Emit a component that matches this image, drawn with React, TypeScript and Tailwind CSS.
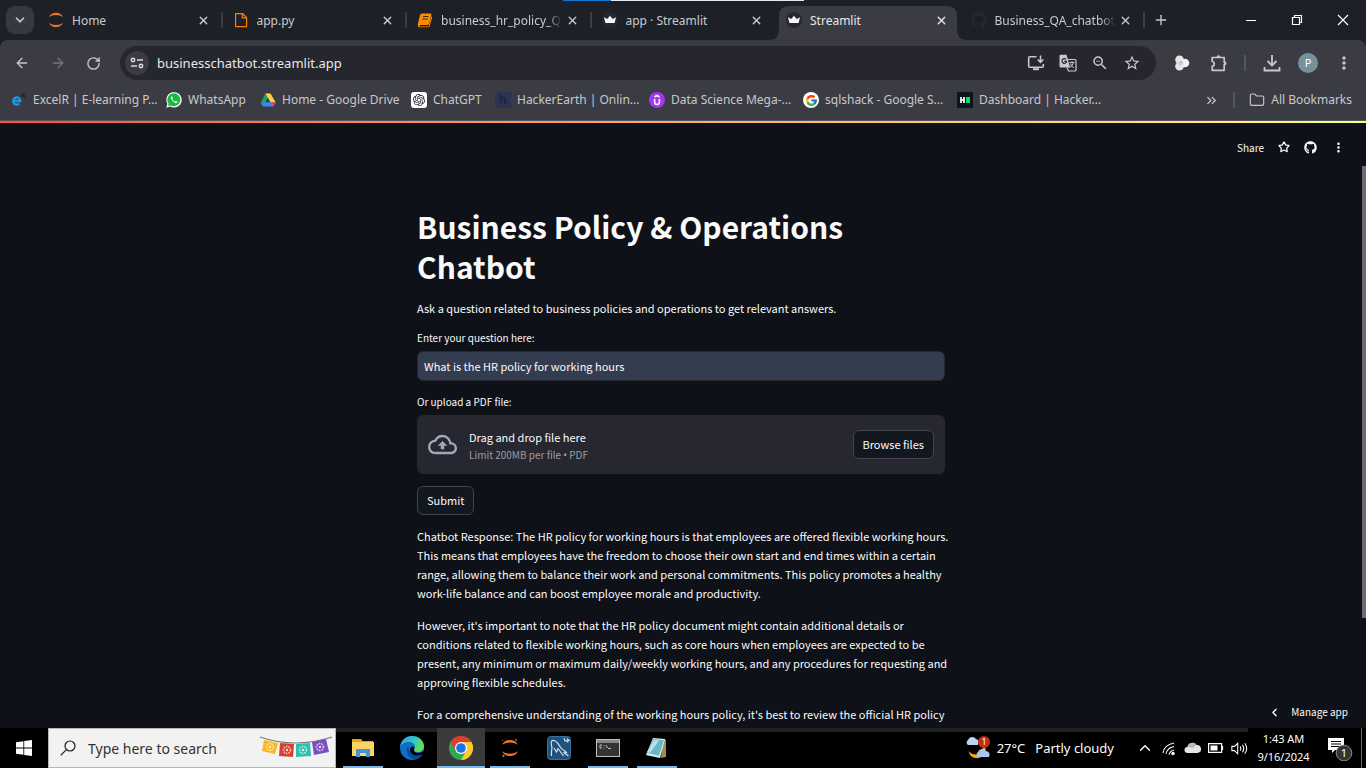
import React from "react";
import { ArrowLeft, ArrowRight, RotateCw, Star, X, Plus, ChevronDown, ChevronLeft, ChevronUp, ChevronsRight, Folder } from "lucide-react";
import { FaGithub, FaWhatsapp } from "react-icons/fa";
import { SiOpenai } from "react-icons/si";
import { FcGoogle } from "react-icons/fc";
import { MdMoreVert, MdOutlineZoomOut, MdStarBorder, MdOutlineCloudUpload } from "react-icons/md";

const uiFont = "font-['Noto_Sans',sans-serif]";
const appFont = "font-['Noto_Sans_CJK_SC',sans-serif]";

function JupyterMark({ size = 16, dots = false }: { size?: number; dots?: boolean }) {
  return (
    <svg width={size} height={size} viewBox="0 0 16 16">
      <path d="M.8 5.2C2 2.500 4.800.8 8 .8s6 1.700 7.200 4.400C13.400 3.800 10.900 3 8 3S2.600 3.800.8 5.200Z" fill="#f37726" />
      <path d="M.8 10.800C2 13.500 4.800 15.200 8 15.200s6-1.700 7.200-4.400C13.400 12.200 10.900 13 8 13s-5.400-.8-7.200-2.200Z" fill="#f37726" />
      {dots && (
        <g fill="#8a8a8a">
          <circle cx="13.500" cy="0.800" r="0.800" />
          <circle cx="1.600" cy="1.400" r="0.500" />
          <circle cx="2.200" cy="15" r="1" />
        </g>
      )}
    </svg>
  );
}

function PageMark() {
  return (
    <svg width="16" height="16" viewBox="0 0 16 16" fill="none" stroke="#ff7c00" strokeWidth="1.200">
      <path d="M2.600 1.600h7l4 4v9h-11z M9.300 1.600v4.300h4.300" />
    </svg>
  );
}

function BookMark() {
  return (
    <svg width="16" height="16" viewBox="0 0 16 16">
      <path d="M4.800 1.500h8.400q1.500 0 1.100 1.400l-2.300 8.600q-.4 1.500-1.800 1.500H3.500q-1.100 0-.9.900.2.500.9.500h8.100l2.500-9.300.7-.8q.5.4.3 1.200l-2.300 8.300q-.4 1.500-1.800 1.500H3q-2.300 0-2.300-2.300L3 3q.4-1.500 1.800-1.500Z" fill="#ff8c00" />
      <path d="M6 4.500h5.500M5.300 7h5.500" stroke="#3a2a14" strokeWidth="1" />
    </svg>
  );
}

function CrownMark() {
  return (
    <svg width="16" height="16" viewBox="0 0 16 16">
      <circle cx="8" cy="8" r="8" fill="#262730" />
      <path d="M2 5.200 5.300 7 8 3.800 10.700 7 14 5.200 12.600 11H3.400Z" fill="#f5f5f5" />
    </svg>
  );
}

const tabs = [
  { title: "Home", icon: <JupyterMark /> },
  { title: "app.py", icon: <PageMark /> },
  { title: "business_hr_policy_QA", icon: <BookMark />, fade: true },
  { title: "app · Streamlit", icon: <CrownMark /> },
  { title: "Streamlit", icon: <CrownMark />, active: true },
  { title: "Business_QA_chatbot/", icon: <FaGithub size={16} color="#24292e" />, fade: true },
];

function TabStrip() {
  return (
    <header className="relative flex h-10 items-center bg-[#1d2027] text-[#c9cacf]">
      <div className="absolute left-[563px] top-0 h-px w-12 bg-[#0a78d4]" />
      <div className="absolute left-[611px] top-0 h-px w-[193px] bg-[#e8e8e8]" />
      <button aria-label="Search tabs" className="ml-1.5 mr-1 flex size-7 shrink-0 items-center justify-center rounded-[9px] bg-[#373940]">
        <ChevronDown size={14} strokeWidth={3} />
      </button>
      <nav className="flex h-full max-w-[1107px] flex-1">
        {tabs.map((t, i) => (
          <div key={i} className={"relative flex min-w-0 flex-1 items-center pl-2.5 pr-[13px] " + (t.active ? "text-[#e6e6ea]" : "")}>
            {t.active && (
              <svg className="absolute bottom-0 left-[-7px] h-[34px] w-[198px]" viewBox="0 0 198 34" preserveAspectRatio="none">
                <path d="M0 34Q10 34 10 24V10Q10 0 20 0H178Q188 0 188 10V24Q188 34 198 34Z" fill="#3b3c43" />
              </svg>
            )}
            <span className="relative shrink-0">{t.icon}</span>
            <a
              href="#"
              className={
                "relative ml-2 flex-1 overflow-hidden whitespace-nowrap pt-px text-xs " +
                (t.fade ? "[mask-image:linear-gradient(to_right,black_88%,transparent)]" : "")
              }
            >
              {t.title}
            </a>
            <button aria-label="Close tab" className="relative ml-1 shrink-0">
              <X size={13} strokeWidth={2.500} />
            </button>
            {(i < 3 || i === 5) && <i className="absolute right-0 top-3 h-4 w-0.5 rounded bg-[#3c3e46]" />}
          </div>
        ))}
      </nav>
      <button aria-label="New tab" className="ml-2">
        <Plus size={16} />
      </button>
      <div className="ml-auto mr-4 flex items-center gap-8 text-white">
        <button aria-label="Minimize">
          <svg width="14" height="14" viewBox="0 0 14 14"><path d="M2 7.500h10" stroke="currentColor" /></svg>
        </button>
        <button aria-label="Restore">
          <svg width="14" height="14" viewBox="0 0 14 14" fill="none" stroke="currentColor" strokeWidth="1.200"><path d="M2.500 4.500h7v7h-7z M4.500 4.500v-2h7v7h-2" /></svg>
        </button>
        <button aria-label="Close">
          <svg width="14" height="14" viewBox="0 0 14 14" stroke="currentColor" strokeWidth="1.200"><path d="m2 2 10 10M12 2 2 12" /></svg>
        </button>
      </div>
    </header>
  );
}

function InstallMark() {
  return (
    <svg width="18" height="18" viewBox="0 0 18 18" fill="none" stroke="currentColor" strokeWidth="1.600">
      <path d="M9.500 2.800H2.600q-.9 0-.9.900v8.600q0 .9.9.9h12.800q.9 0 .9-.9V10" />
      <path d="M6 15.200h6" strokeWidth="2" />
      <path d="M13.500 1.500v6.500M10.700 5.500l2.800 2.800 2.800-2.800" />
    </svg>
  );
}

function TranslateMark() {
  return (
    <svg width="18" height="18" viewBox="0 0 18 18" fill="none">
      <path d="M8 5.500h8q1 0 1 1V16q0 1-1 1H9.500L8 13.500" stroke="currentColor" strokeWidth="1.200" />
      <path d="M10.500 8.500h5M13 7.300v1.200M14.500 8.500Q13.500 12 10.800 13.500M11.500 9.500q1 2.500 3.300 4.500" stroke="currentColor" strokeWidth="1" />
      <path d="M1.500.8h6l3.700 12.700H1.500q-1 0-1-1V1.800q0-1 1-1Z" fill="currentColor" />
      <path d="M7 5.400a2.300 2.300 0 1 0 .6 2H5.300" stroke="#26272e" strokeWidth="1.200" />
    </svg>
  );
}

function PuzzleMark() {
  return (
    <svg width="18" height="18" viewBox="0 0 18 18" fill="none" stroke="currentColor" strokeWidth="1.700" strokeLinejoin="round">
      <path d="M2.200 3.500h12v4.800h.6v2.200h-.6v5.800h-12v-4q2-.4 2-2.400t-2-2.400Z" />
      <path d="M6.800 3.200a1.700 1.700 0 0 1 3.400 0ZM14.500 7.700a1.700 1.700 0 0 1 0 3.400Z" fill="currentColor" strokeWidth=".6" />
    </svg>
  );
}

function Toolbar() {
  return (
    <div className="flex h-[46px] items-center rounded-t-lg bg-[#3b3c43] pl-3.5 pr-3 text-[#c7c8cc]">
      <button aria-label="Back"><ArrowLeft size={16} /></button>
      <button aria-label="Forward" className="ml-5 text-[#74757b]"><ArrowRight size={16} /></button>
      <button aria-label="Reload" className="ml-5 mr-[19px]"><RotateCw size={15} strokeWidth={2.200} /></button>
      <div className="flex h-[34px] flex-1 items-center rounded-full bg-[#26272e] pl-[5px] pr-[15px]">
        <button aria-label="Site information" className="flex size-6 items-center justify-center rounded-full bg-[#3b3c43]">
          <svg width="14" height="14" viewBox="0 0 14 14" fill="none" stroke="#dcdce0" strokeWidth="1.500">
            <circle cx="3" cy="4" r="1.700" /><path d="M7 4h6" /><circle cx="11" cy="10" r="1.700" /><path d="M1 10h6" />
          </svg>
        </button>
        <input aria-label="Address" defaultValue="businesschatbot.streamlit.app" className="ml-2 min-w-0 flex-1 bg-transparent pt-0.5 text-[13px] text-[#e8e8eb] outline-none" />
        <div className="flex items-center gap-3.5">
          <button aria-label="Install app"><InstallMark /></button>
          <button aria-label="Translate"><TranslateMark /></button>
          <button aria-label="Zoom"><MdOutlineZoomOut size={18} /></button>
          <button aria-label="Bookmark"><MdStarBorder size={18} /></button>
        </div>
      </div>
      <button aria-label="Extension" className="ml-[18px]">
        <svg width="16" height="16" viewBox="0 0 16 16" fill="#e6e6e6"><circle cx="5.500" cy="4.800" r="4.300" /><circle cx="5.500" cy="11.200" r="4.300" /><circle cx="11" cy="8" r="4.300" fill="#f2f2f2" /><circle cx="6.800" cy="8" r="2.300" fill="#c8c8c8" /></svg>
      </button>
      <button aria-label="Extensions" className="ml-5"><PuzzleMark /></button>
      <i className="ml-4 h-4 w-0.5 bg-[#54565e]" />
      <button aria-label="Downloads" className="ml-4">
        <svg width="20" height="20" viewBox="0 0 20 20" fill="none" stroke="currentColor" strokeWidth="1.800"><path d="M10 2v10M5.500 8l4.500 4.500L14.500 8M2.500 14v3.500h15V14" /></svg>
      </button>
      <button aria-label="Profile" className="ml-4 flex size-5 items-center justify-center rounded-full bg-[#78909c] text-[11px] text-white">P</button>
      <button aria-label="Menu" className="ml-4"><MdMoreVert size={20} /></button>
    </div>
  );
}

const bookmarks = [
  {
    w: "w-[155px]", label: "ExcelR | E-learning P...",
    icon: <svg width="16" height="16" viewBox="0 0 16 16"><path d="M2.500 9H9.300A3.600 3.600 0 1 0 8.300 11.500" fill="none" stroke="#2196e8" strokeWidth="2.300" /><path d="m10 2 5 4M14 1l-3 4" stroke="#26282e" strokeWidth="1.300" /></svg>,
  },
  {
    w: "w-[94px]", label: "WhatsApp",
    icon: <svg width="16" height="16" viewBox="0 0 16 16"><path d="M.3 15.700 1.400 11.800A7.700 7.700 0 1 1 4.300 14.600Z" fill="white" /><path d="M1.900 14.100 2.600 11.600A6.500 6.500 0 1 1 4.600 13.400Z" fill="#17b944" /><path d="M5.600 4.300q-1 .9-.6 2.200 1 3.300 4.600 4.700 1.500.2 2-1.400l-1.800-.9-.9.900q-1.800-.8-2.700-2.600l.7-.9-.7-1.900Z" fill="white" /></svg>,
  },
  {
    w: "w-[151px]", label: "Home - Google Drive",
    icon: <svg width="16" height="16" viewBox="0 0 16 16"><path d="M5.500 1.500h5L5.200 10.500.8 10.500Z" fill="#1fa463" /><path d="M5.500 1.500h5l5.200 9H10.600Z" fill="#ffcf48" /><path d="M3.200 10.200h12.600L13.300 14.500H2.800L.6 10.600Z" fill="#4285f4" /><path d="m10.600 10.200h5.200L13.300 14.500Z" fill="#ea4335" /></svg>,
  },
  {
    w: "w-[84px]", label: "ChatGPT",
    icon: <span className="flex size-4 items-center justify-center rounded-[3px] bg-white"><SiOpenai size={12} color="#222" /></span>,
  },
  {
    w: "w-[154px]", label: "HackerEarth | Onlin...",
    icon: <span className="flex size-4 items-center justify-center bg-[#2c3454] text-xs font-bold text-[#1f2440]">h</span>,
  },
  {
    w: "w-[154px]", label: "Data Science Mega-...",
    icon: <svg width="16" height="16" viewBox="0 0 16 16"><circle cx="8" cy="8" r="8" fill="#a435f0" /><path d="M5.600 7v3q0 2.500 2.400 2.500t2.400-2.500V7M5.500 5 8 3.500 10.500 5" fill="none" stroke="white" strokeWidth="1.600" /></svg>,
  },
  {
    w: "w-[154px]", label: "sqlshack - Google S...",
    icon: <span className="flex size-4 items-center justify-center rounded-full bg-white"><FcGoogle size={13} /></span>,
  },
  {
    w: "w-[154px]", label: "Dashboard | Hacker...",
    icon: <svg width="16" height="16" viewBox="0 0 16 16"><path d="M0 0h16v16H0z" fill="#0e141e" /><path d="M4 5v6M7 5v6M4 8h3" stroke="white" strokeWidth="1.700" /><path d="M9 5h4v6H9z" fill="#00e35a" /></svg>,
  },
];

function BookmarksBar() {
  return (
    <div className="flex h-[35px] items-center border-b border-[#55565b] bg-[#3b3c43] pb-1.5 pl-[11px] pr-3.5 text-xs text-[#c7c8cc]">
      {bookmarks.map((b) => (
        <a key={b.label} href="#" className={"flex shrink-0 items-center gap-1.5 whitespace-nowrap " + b.w}>
          {b.icon}
          {b.label}
        </a>
      ))}
      <button aria-label="More bookmarks" className="ml-auto"><ChevronsRight size={15} /></button>
      <i className="ml-3.5 h-4 w-0.5 bg-[#54565e]" />
      <a href="#" className="ml-3.5 flex items-center gap-1.5 whitespace-nowrap">
        <Folder size={16} strokeWidth={1.700} />
        All Bookmarks
      </a>
    </div>
  );
}

function AppPage() {
  return (
    <main className={"relative min-h-0 flex-1 overflow-hidden bg-[#0e1117] text-[#fafafa] " + appFont}>
      <div className="h-0.5 bg-linear-to-r from-[#ff4b4b] to-[#fffd80]" />
      <div className="flex h-12 items-center justify-end gap-3.5 pr-5 text-[10px]">
        <button>Share</button>
        <button aria-label="Favorite"><Star size={12} strokeWidth={2.500} /></button>
        <a href="#" aria-label="View source"><FaGithub size={13} /></a>
        <button aria-label="App menu"><MdMoreVert size={15} /></button>
      </div>
      <div className="pr-1">
        <form className="mx-auto mt-[35px] w-[528px] max-w-full text-[11px]" onSubmit={(e) => e.preventDefault()}>
          <h1 className="text-[30px] font-bold leading-10">Business Policy &amp; Operations<br />Chatbot</h1>
          <p className="mt-3 leading-5">Ask a question related to business policies and operations to get relevant answers.</p>
          <label htmlFor="question" className="mt-2.5 block text-[10px] leading-5">Enter your question here:</label>
          <input
            id="question"
            defaultValue="What is the HR policy for working hours"
            className="mt-[3px] h-[30px] w-full rounded-md border border-[#262730] bg-[#343c4f] px-1.5 pb-px outline-none"
          />
          <label htmlFor="upload" className="mt-[11px] block text-[10px] leading-5">Or upload a PDF file:</label>
          <section className="mt-[3px] flex h-[59px] items-center rounded-md bg-[#262730] px-[11px]">
            <MdOutlineCloudUpload size={29} color="#a3a8b8" />
            <div className="ml-3 flex-1">
              <p className="leading-5">Drag and drop file here</p>
              <p className="text-[10px] leading-4 text-[#9c9da3]">Limit 200MB per file <span className={uiFont}>•</span> PDF</p>
            </div>
            <button id="upload" type="button" className="h-[29px] rounded-md border border-[#41444c] bg-[#131720] px-[9px]">Browse files</button>
          </section>
          <button type="submit" className="mt-3 block h-[29px] rounded-md border border-[#41444c] bg-[#131720] px-[9px]">Submit</button>
          <div className="mt-3 flex flex-col gap-[13px] whitespace-nowrap leading-[19px]">
            <p>
              Chatbot Response: The HR policy for working hours is that employees are offered flexible working hours.<br />
              This means that employees have the freedom to choose their own start and end times within a certain<br />
              range, allowing them to balance their work and personal commitments. This policy promotes a healthy<br />
              work-life balance and can boost employee morale and productivity.
            </p>
            <p>
              However, it's important to note that the HR policy document might contain additional details or<br />
              conditions related to flexible working hours, such as core hours when employees are expected to be<br />
              present, any minimum or maximum daily/weekly working hours, and any procedures for requesting and<br />
              approving flexible schedules.
            </p>
            <p>For a comprehensive understanding of the working hours policy, it's best to review the official HR policy</p>
          </div>
        </form>
      </div>
      <div className="absolute right-0 top-[45px] h-[452px] w-1 bg-[#6b6c70]" />
      <button className="absolute bottom-2 right-[18px] flex items-center gap-2.5 text-[10px] leading-4">
        <ChevronLeft size={13} strokeWidth={2.500} />
        Manage app
      </button>
    </main>
  );
}

function Banner() {
  const flags = [
    ["M5 4 19 7 16 18 3 15Z", "#f8b820"],
    ["M21 7 35 8 34 21 20 20Z", "#d8402c"],
    ["M37 8 51 7 52 20 37 21Z", "#2cc0b4"],
    ["M53 6 67 3 70 16 55 19Z", "#7b4fc0"],
  ];
  return (
    <svg width="74" height="24" viewBox="0 0 74 24" fill="none">
      <path d="M1 1Q36 13 73 1" stroke="#777" strokeWidth="1.200" />
      {flags.map(([d, c], i) => (
        <g key={c}>
          <path d={d} fill={c} />
          <circle cx={[11, 28, 44, 61][i]} cy={[11, 14, 14, 11][i]} r="3.500" stroke="white" strokeOpacity=".7" strokeWidth="1.500" strokeDasharray="1.500 1" />
          <circle cx={[11, 28, 44, 61][i]} cy={[11, 14, 14, 11][i]} r="1.200" fill="white" fillOpacity=".8" />
        </g>
      ))}
    </svg>
  );
}

function ChromeMark() {
  return (
    <svg width="24" height="24" viewBox="0 0 24 24">
      <circle cx="12" cy="12" r="12" fill="#2fa84f" />
      <path d="M12 12 1.600 6A12 12 0 0 1 22.400 6Z" fill="#e33b2e" />
      <path d="M12 6H22.400A12 12 0 0 1 12 24L17.200 15Z" fill="#fcc934" />
      <path d="M1.600 6 6.800 15 12 6Z" fill="#e33b2e" />
      <circle cx="12" cy="12" r="6" fill="white" />
      <circle cx="12" cy="12" r="4.800" fill="#1a73e8" />
    </svg>
  );
}

const taskApps = [
  {
    name: "File Explorer", open: true,
    icon: <svg width="22" height="20" viewBox="0 0 22 20"><path d="M0 1h9l1.500 2H21v15H0z" fill="#e8a317" /><path d="M0 4h22v14H0z" fill="#fcd462" /><path d="M4 11h14v8h-4v-4H8v4H4z" fill="#3f95dc" /></svg>,
  },
  {
    name: "Edge",
    icon: (
      <svg width="24" height="24" viewBox="0 0 24 24">
        <defs>
          <linearGradient id="edgeTop" x1="0" y1="0" x2="1" y2=".4"><stop offset="0" stopColor="#1f9fe4" /><stop offset=".6" stopColor="#33c6c8" /><stop offset="1" stopColor="#66dd55" /></linearGradient>
        </defs>
        <circle cx="12" cy="12" r="12" fill="#0f6fc6" />
        <path d="M0 11C1 4 6 0 12 0c7 0 12 5 12 10 0 4-3 6-6 6-3 0-4-1-4-2s1-1 1-3c0-3-3-5-6-5-4 0-8 2-9 5Z" fill="url(#edgeTop)" />
        <path d="M8 10c-3 5 0 12 7 13.600C20 22.500 22 20 23 18c-2 1-4 1.500-6 1.500-4 0-8-3-8-6.500Z" fill="#0a4a94" />
        <path d="M14 14c0 1 1 3 4.500 3 2 0 4-.7 5.200-2l-.7 3c-2 1-4 1.500-6 1.500-4 0-7-3-7-5.500 0-1.500 1-3 2.500-3.500C15 11 14 13 14 14Z" fill="black" />
      </svg>
    ),
  },
  { name: "Chrome", open: true, active: true, icon: <ChromeMark /> },
  { name: "Jupyter", open: true, icon: <JupyterMark size={18} dots /> },
  {
    name: "MySQL Workbench",
    icon: <svg width="24" height="24" viewBox="0 0 24 24"><rect x=".5" y=".5" width="23" height="23" rx="3" fill="#20527d" stroke="#39709c" /><path d="M4.500 20C3.500 15 6 14 4.500 9 3.500 6 4.500 4 7 4.500c4 1 5 5 7 7.500 1.500 2 4 2.500 5.500 4.500l-2.500.3 4.500 3.200M7 12l2.500 4 1.500-3.500 5.500 7.500M17 2l1 3 4-.5-2-2M20 4.500l1 2" fill="none" stroke="#dbe7f1" strokeWidth="1.100" /></svg>,
  },
  {
    name: "Command Prompt", open: true,
    icon: <svg width="24" height="20" viewBox="0 0 24 20"><rect x=".5" y="1.500" width="23" height="17" fill="#333" stroke="#bdbdbd" /><path d="M1 2h22v3H1z" fill="#888" /><path d="M6 7H4v3h2M8 7v.8M8 9.500v.8M10 7l1.500 3M12 10.500h3" stroke="#ddd" strokeWidth=".8" fill="none" /></svg>,
  },
  {
    name: "Notepad", open: true,
    icon: <svg width="24" height="22" viewBox="0 0 24 22"><path d="m18 2 3 1v17l-5 1z" fill="#a38a4d" /><path d="M8 1 20 2 15 21 1 18Z" fill="#e8f3f5" /><path d="M8 2 19 3 14 19 2 16Z" fill="#6bb8c5" /><path d="m9 3 5 .5L5 16l-3-.7Z" fill="#b8e2e8" /></svg>,
  },
];

function Taskbar() {
  return (
    <footer className="flex h-10 shrink-0 bg-black text-white">
      <button aria-label="Start" className="flex w-12 items-center justify-center">
        <svg width="16" height="16" viewBox="0 0 16 16" fill="white"><path d="M0 2.300 7.400 1.200v6.400H0zM8.200 1.100 16 0v7.600H8.200zM0 8.400h7.400v6.400L0 13.700zM8.200 8.400H16V16l-7.800-1.100z" /></svg>
      </button>
      <label className="flex w-72 items-center border border-[#b5b5b5] bg-[#f2f2f2] pl-[11px] pr-0.5">
        <svg width="16" height="16" viewBox="0 0 16 16" fill="none" stroke="#1a1a1a" strokeWidth="1.200"><circle cx="10" cy="6" r="5" /><path d="M6.400 9.600.7 15.400" /></svg>
        <input aria-label="Search" placeholder="Type here to search" className="ml-3 min-w-0 flex-1 bg-transparent pt-0.5 text-sm text-[#333] outline-none placeholder:text-[#333]" />
        <Banner />
      </label>
      <div className="flex flex-1 border-t-4 border-[#222] pl-[3px]">
        <nav className="-mt-1 flex">
          {taskApps.map((a) => (
            <button key={a.name} aria-label={a.name} className={"relative mr-px flex w-12 items-center justify-center " + (a.active ? "bg-[#3a3a3a]" : "")}>
              {a.icon}
              {a.open && <i className={"absolute bottom-0 h-0.5 bg-[#76b9ed] " + (a.active ? "inset-x-0" : "inset-x-1")} />}
            </button>
          ))}
        </nav>
        <div className="-mt-1 ml-auto flex items-center text-[13px]">
          <svg width="26" height="24" viewBox="0 0 26 24">
            <path d="M17 9c3 5-3 11-9 9-2-.5-4-2-4.500-3 1 5 5 8 10 7s8-5 7-10Z" fill="#f5a623" />
            <path d="M3 9a3 3 0 0 1 0-5 4.500 4.500 0 0 1 8-1q4 1 2 6Z" fill="#bcd3f4" />
            <path d="M13 21a3 3 0 0 1 0-5 4.500 4.500 0 0 1 8-1q5 1 3 6Z" fill="#a9c6f1" />
            <circle cx="19" cy="6" r="6" fill="#c42b1c" />
            <text x="19" y="9" fontSize="9" textAnchor="middle" fill="white">1</text>
          </svg>
          <span className="ml-1.5 pt-px">27°C</span>
          <span className="ml-2.5 whitespace-nowrap pt-px">Partly cloudy</span>
        </div>
        <div className="-mt-1 ml-[22px] flex items-center gap-[7px]">
          <ChevronUp size={18} strokeWidth={1.800} />
          <svg width="16" height="16" viewBox="0 0 16 16" fill="none" stroke="white" strokeWidth="1.100"><path d="M2 13Q3 5 13 3M5 14Q6 8 13 6.500M8 14.500Q9 11 13 10" /><circle cx="12" cy="13.500" r="1.200" fill="white" /></svg>
          <svg width="17" height="12" viewBox="0 0 16 12"><path d="M3 11a3 3 0 0 1 0-6 5 5 0 0 1 9-2 3.800 3.800 0 0 1 1 8Z" fill="#e6e6e6" /><path d="M3 5a5 5 0 0 1 9-2Q9 4 8.500 6.500 6 4.500 3 5Z" fill="#bbb" /></svg>
          <svg width="16" height="10" viewBox="0 0 16 10"><path d="M.6.600h13v8.800H.6zM14.500 3v4" fill="none" stroke="white" strokeWidth="1.200" /><path d="M2.500 2.500h7v5h-7z" fill="white" /></svg>
          <svg width="17" height="15" viewBox="0 0 16 14" fill="none" stroke="white"><path d="M.8 5h2.500l3-3v10l-3-3H.8zM8.500 5q1.500 2 0 4M10.700 3.500q2.500 3.500 0 7M13 2q3.500 5 0 10" /></svg>
        </div>
      </div>
      <time className="flex w-[71px] flex-col justify-center text-center text-[11px] leading-[18px]">
        <span>1:43 AM</span>
        <span>9/16/2024</span>
      </time>
      <button aria-label="Notifications" className="ml-2 mr-2 flex items-center">
        <svg width="26" height="26" viewBox="0 0 26 26">
          <path d="M1 3h16v12H8l-3 3v-3H1z" fill="white" />
          <path d="M4 6.500h10M4 9h10M4 11.500h10" stroke="black" />
          <circle cx="17" cy="18" r="7.800" fill="#333" stroke="#888" />
          <text x="17" y="22" fontSize="11" textAnchor="middle" fill="white">1</text>
        </svg>
      </button>
      <i className="mr-1 w-px bg-[#666]" />
    </footer>
  );
}

export default function App() {
  return (
    <div className={"flex h-screen flex-col overflow-hidden bg-[#1d2027] " + uiFont}>
      <TabStrip />
      <Toolbar />
      <BookmarksBar />
      <AppPage />
      <Taskbar />
    </div>
  );
}
